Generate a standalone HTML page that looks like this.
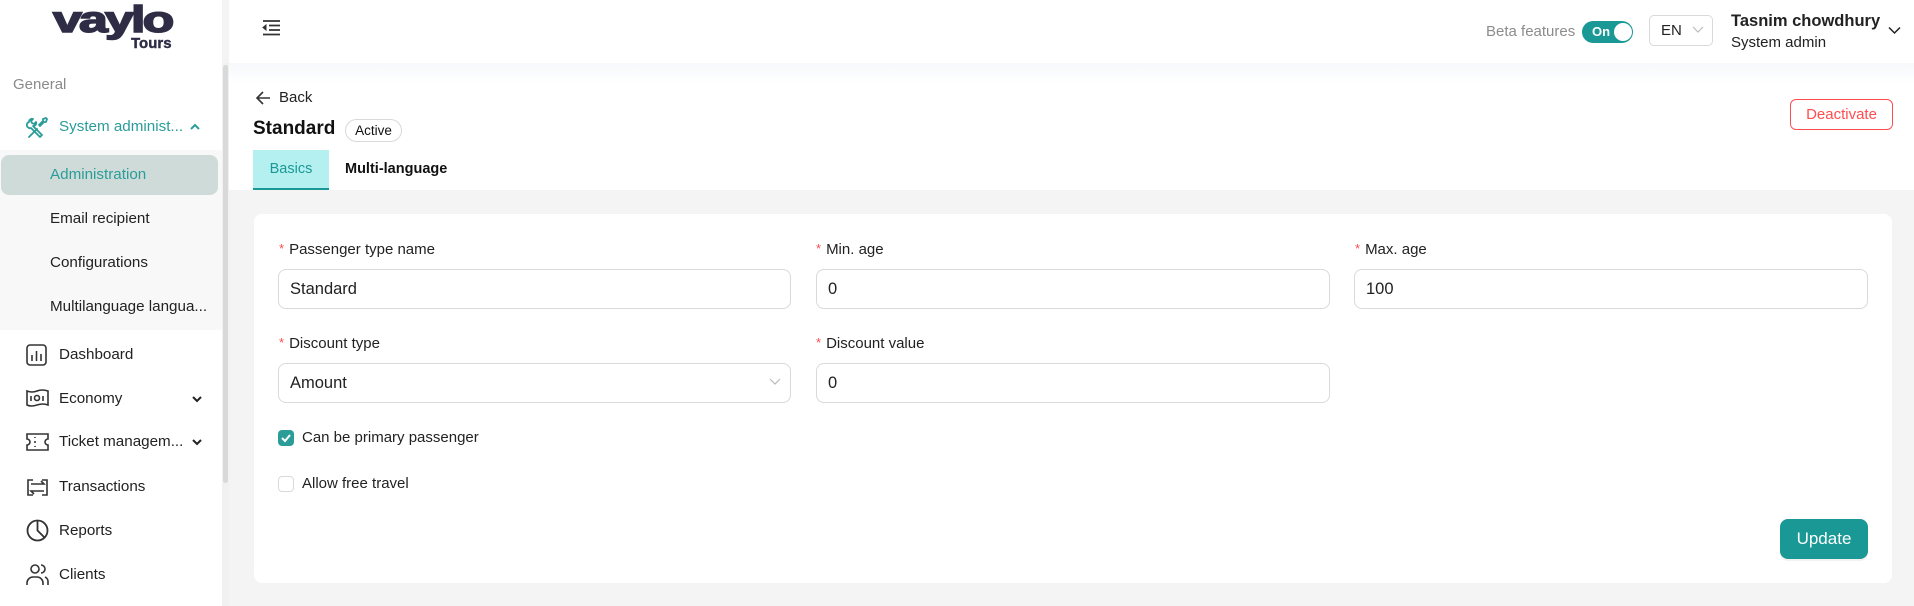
<!DOCTYPE html>
<html><head><meta charset="utf-8"><style>
*{box-sizing:border-box;margin:0;padding:0}
body{width:1914px;height:606px;overflow:hidden;font-family:"Liberation Sans",sans-serif;background:#f4f4f4;position:relative;color:#222}
.abs{position:absolute}
.side{left:0;top:0;width:222px;height:606px;background:#fff}
.track{left:222px;top:63px;width:7px;height:543px;background:#f1f1f1}
.thumb{left:223px;top:65px;width:5px;height:418px;background:#d9d9d9;border-radius:3px}
.logo{left:53px;top:-1px;font-weight:bold;font-size:37px;color:#2e2d45;letter-spacing:-2px;transform-origin:left top;transform:scaleX(1.4);-webkit-text-stroke:1.6px #2e2d45}
.tours{left:131px;top:35px;font-weight:bold;font-size:15px;color:#2e2d45;-webkit-text-stroke:0.4px #2e2d45}
.gen{left:13px;top:76px;font-size:15px;color:#8a8a8a}
.mi{font-size:15.2px;color:#222;white-space:nowrap}
.sub{left:0;top:150px;width:222px;height:180px;background:#f8f8f8}
.adm{left:1px;top:155px;width:217px;height:40px;background:#cfdbd8;border-radius:8px}
.top{left:229px;top:0;width:1685px;height:63px;background:#fff}
.shadow{left:229px;top:63px;width:1685px;height:127px;background:linear-gradient(#f6f8fb,#fff 20px)}
.card{left:254px;top:214px;width:1638px;height:369px;background:#fff;border-radius:8px}
.lbl{font-size:15px;color:#222}
.lbl b{color:#ff4d4f;font-weight:normal;font-size:13px;margin-right:5px;position:relative;top:-1px}
.inp{height:40px;border:1px solid #d9d9d9;border-radius:8px;background:#fff;font-size:16.5px;padding:10px 11px;color:#222}
svg{position:absolute}
</style></head><body>
<div class="abs side"></div>
<div class="abs sub"></div>
<div class="abs adm"></div>
<div class="abs track"></div><div class="abs thumb"></div>
<div class="abs logo">vaylo</div>
<div class="abs tours">Tours</div>
<div class="abs gen">General</div>
<svg style="left:26px;top:116px" width="24" height="24" viewBox="0 0 24 24" fill="none" stroke="#2a9d99" stroke-width="1.8" stroke-linecap="round" stroke-linejoin="round"><path d="M3 21l8-8M14 10l4-4 2 0 1-3-1-1-3 1 0 2-4 4"/><path d="M3 6a3 3 0 0 1 4-3l-2 2 1 2 2 1 2-2a3 3 0 0 1-3 4l9 9-2 2-9-9a3 3 0 0 1-2-6z"/></svg>
<div class="abs mi" style="left:59px;top:118px;color:#2a9d99">System administ...</div>
<svg style="left:189px;top:122px" width="12" height="10" viewBox="0 0 12 10"><path d="M2 7l4-4 4 4" stroke="#2a9d99" stroke-width="2" fill="none"/></svg>
<div class="abs mi" style="left:50px;top:166px;color:#2a9d99">Administration</div>
<div class="abs mi" style="left:50px;top:210px">Email recipient</div>
<div class="abs mi" style="left:50px;top:254px">Configurations</div>
<div class="abs mi" style="left:50px;top:298px">Multilanguage langua...</div>
<svg style="left:26px;top:343px" width="22" height="24" viewBox="0 0 22 24" fill="none" stroke="#333" stroke-width="1.6"><rect x="1" y="2" width="19" height="20" rx="3"/><path d="M6 18v-6M10.5 18v-10M15 18v-7"/></svg>
<div class="abs mi" style="left:59px;top:346px">Dashboard</div>
<svg style="left:26px;top:388px" width="23" height="20" viewBox="0 0 23 20" fill="none" stroke="#333" stroke-width="1.6"><path d="M1 3q5 2 10 0t11 0v14q-5-2-11 0t-10 0z"/><path d="M5 8v5M17 8v5"/><circle cx="11" cy="10" r="2.5"/></svg>
<div class="abs mi" style="left:59px;top:390px">Economy</div>
<svg style="left:191px;top:395px" width="12" height="8" viewBox="0 0 12 8"><path d="M2 2l4 4 4-4" stroke="#222" stroke-width="2" fill="none"/></svg>
<svg style="left:26px;top:432px" width="23" height="20" viewBox="0 0 23 20" fill="none" stroke="#333" stroke-width="1.6"><path d="M1 2h21v5a3 3 0 0 0 0 6v5H1v-5a3 3 0 0 0 0-6z"/><path d="M9 5v1M9 9v2M9 14v1"/></svg>
<div class="abs mi" style="left:59px;top:433px">Ticket managem...</div>
<svg style="left:191px;top:438px" width="12" height="8" viewBox="0 0 12 8"><path d="M2 2l4 4 4-4" stroke="#222" stroke-width="2" fill="none"/></svg>
<svg style="left:26px;top:476px" width="23" height="22" viewBox="0 0 23 22" fill="none" stroke="#333" stroke-width="1.6"><path d="M7 4H2v15h5M16 4h5v15h-5M5 8h13l-3-3M18 15H5l3 3"/></svg>
<div class="abs mi" style="left:59px;top:478px">Transactions</div>
<svg style="left:26px;top:519px" width="23" height="23" viewBox="0 0 23 23" fill="none" stroke="#333" stroke-width="1.8"><circle cx="11.5" cy="11.5" r="10"/><path d="M11.5 1.5v10l7 7"/></svg>
<div class="abs mi" style="left:59px;top:522px">Reports</div>
<svg style="left:26px;top:563px" width="23" height="24" viewBox="0 0 23 24" fill="none" stroke="#333" stroke-width="1.6"><circle cx="9" cy="6" r="4"/><path d="M1 22v-2a6 6 0 0 1 6-6h4a6 6 0 0 1 6 6v2M15 2a4 4 0 0 1 0 8M19 14a5 5 0 0 1 3 5v3"/></svg>
<div class="abs mi" style="left:59px;top:566px">Clients</div>

<div class="abs top"></div>
<div class="abs shadow"></div>
<svg style="left:262px;top:20px" width="18" height="16" viewBox="0 0 18 16" fill="none" stroke="#333" stroke-width="1.8"><path d="M1 1h17M7 5.5h11M7 10h11M1 14.5h17"/><path d="M4 5v5L1 7.5z" fill="#333" stroke-width="1"/></svg>
<div class="abs" style="left:1486px;top:23px;font-size:15px;color:#8c8c8c">Beta features</div>
<div class="abs" style="left:1582px;top:21px;width:51px;height:22px;border-radius:11px;background:#1a9895"></div>
<div class="abs" style="left:1592px;top:24px;font-size:13px;color:#fff;font-weight:bold">On</div>
<div class="abs" style="left:1614px;top:23px;width:18px;height:18px;border-radius:9px;background:#fff"></div>
<div class="abs" style="left:1649px;top:15px;width:64px;height:31px;border:1px solid #d9d9d9;border-radius:5px"></div>
<div class="abs" style="left:1661px;top:22px;font-size:15px;color:#222">EN</div>
<svg style="left:1692px;top:26px" width="12" height="8" viewBox="0 0 12 8"><path d="M1 1l5 5 5-5" stroke="#bbb" stroke-width="1.2" fill="none"/></svg>
<div class="abs" style="left:1731px;top:12px;font-size:16.5px;font-weight:bold;color:#222">Tasnim chowdhury</div>
<div class="abs" style="left:1731px;top:34px;font-size:15px;color:#222">System admin</div>
<svg style="left:1888px;top:26px" width="13" height="9" viewBox="0 0 13 9"><path d="M1 1.5l5.5 5.5 5.5-5.5" stroke="#222" stroke-width="1.5" fill="none"/></svg>

<svg style="left:255px;top:90px" width="16" height="16" viewBox="0 0 16 16" fill="none" stroke="#333" stroke-width="1.6"><path d="M15 8H2M8 2L2 8l6 6"/></svg>
<div class="abs" style="left:279px;top:89px;font-size:15px;color:#222">Back</div>
<div class="abs" style="left:253px;top:118px;font-size:19px;font-weight:bold;color:#111">Standard</div>
<div class="abs" style="left:345px;top:119px;width:57px;height:23px;border:1px solid #d9d9d9;border-radius:12px;font-size:13.5px;text-align:center;line-height:21px;color:#111">Active</div>
<div class="abs" style="left:1790px;top:99px;width:103px;height:31px;border:1px solid #ff4d4f;border-radius:6px;color:#ff4d4f;font-size:15px;text-align:center;line-height:29px">Deactivate</div>
<div class="abs" style="left:253px;top:150px;width:76px;height:40px;background:#b5f0f0;border-bottom:2px solid #1a9895;color:#1a9895;font-size:14.5px;text-align:center;line-height:38px">Basics</div>
<div class="abs" style="left:345px;top:150px;font-size:14.5px;font-weight:bold;line-height:38px;color:#111">Multi-language</div>

<div class="abs card"></div>
<div class="abs lbl" style="left:279px;top:241px"><b>*</b>Passenger type name</div>
<div class="abs inp" style="left:278px;top:269px;width:513px">Standard</div>
<div class="abs lbl" style="left:816px;top:241px"><b>*</b>Min. age</div>
<div class="abs inp" style="left:816px;top:269px;width:514px">0</div>
<div class="abs lbl" style="left:1355px;top:241px"><b>*</b>Max. age</div>
<div class="abs inp" style="left:1354px;top:269px;width:514px">100</div>
<div class="abs lbl" style="left:279px;top:335px"><b>*</b>Discount type</div>
<div class="abs inp" style="left:278px;top:363px;width:513px">Amount</div>
<svg style="left:769px;top:378px" width="12" height="8" viewBox="0 0 12 8"><path d="M1 1l5 5 5-5" stroke="#bbb" stroke-width="1.2" fill="none"/></svg>
<div class="abs lbl" style="left:816px;top:335px"><b>*</b>Discount value</div>
<div class="abs inp" style="left:816px;top:363px;width:514px">0</div>
<div class="abs" style="left:278px;top:430px;width:16px;height:16px;border-radius:4px;background:#2a9d99"></div>
<svg style="left:278px;top:430px" width="16" height="16" viewBox="0 0 16 16"><path d="M4 8l3 3 5-6" stroke="#fff" stroke-width="2" fill="none"/></svg>
<div class="abs lbl" style="left:302px;top:429px">Can be primary passenger</div>
<div class="abs" style="left:278px;top:476px;width:16px;height:16px;border-radius:4px;border:1px solid #d9d9d9;background:#fff"></div>
<div class="abs lbl" style="left:302px;top:475px">Allow free travel</div>
<div class="abs" style="left:1780px;top:519px;width:88px;height:40px;border-radius:8px;background:#1a9895;color:#fff;font-size:17px;text-align:center;line-height:40px;box-shadow:0 2px 0 rgba(0,0,0,.05)">Update</div>
</body></html>
